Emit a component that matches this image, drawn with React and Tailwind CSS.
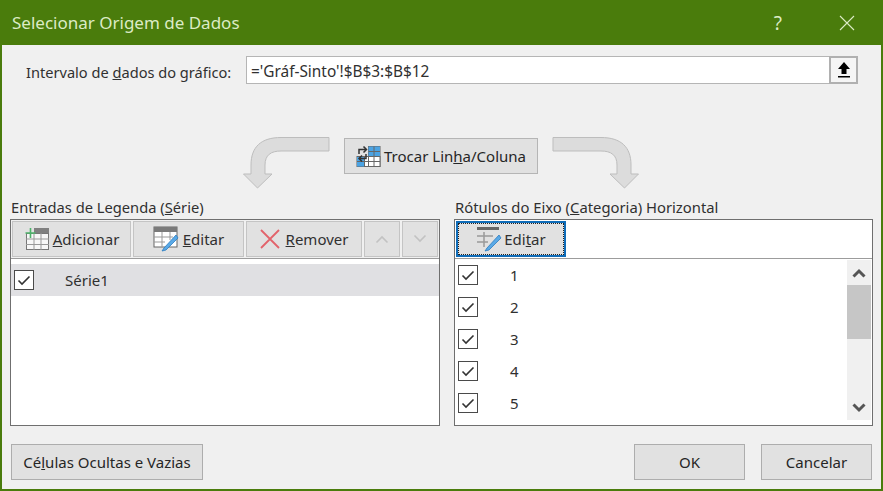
import React from 'react';

// ─── Small drawings ───────────────────────────────────────────────────────────

const BigArrow = ({ flip }) => (
  <svg width="88" height="52" viewBox="0 0 88 52" className={flip ? '-scale-x-100' : ''}>
    <path
      d="M86 .5 H38 C18 .5 8 10 8 28 V37 H.5 L14.5 51 L29 37 H22 V28 C22 18 28 14 38 14 H86 Z"
      fill="#dcdcdc"
      stroke="#bdbdbd"
      strokeWidth="1"
    />
  </svg>
);

const SwitchIcon = () => (
  <svg width="25" height="22" viewBox="0 0 25 22">
    <rect x="1" y="11.5" width="23" height="10" fill="#fff" stroke="#666" />
    <rect x="12.5" y="1.5" width="11.5" height="20" fill="#fff" stroke="#666" />
    <path d="M12.5 1.5 H24 V11 H12.5 Z" fill="#4ba3e3" />
    <path d="M1 12 H8 V21.5 H1 Z" fill="#4ba3e3" />
    <path d="M18 1.5V21.5M8.5 12V21.5M1 16.5H24M12.5 6.5H24M12.5 11.5H24" stroke="#666" fill="none" />
    <path d="M3 9 V4.5 H10 M7.5 1.5 L10.5 4.5 L7.5 7.5" stroke="#333" strokeWidth="1.5" fill="none" />
    <path d="M10 9 V13.5 H3.5 M6 10.5 L3 13.5 L6 16.5" stroke="#333" strokeWidth="1.5" fill="none" />
  </svg>
);

const AddIcon = () => (
  <svg width="26" height="24" viewBox="0 0 26 24">
    <rect x="2.5" y="6.5" width="22" height="16" fill="#f7f7f7" stroke="#777" />
    <rect x="10" y="1" width="15" height="5" fill="#808080" />
    <path d="M10 6V23M17 6V23M2 12H25M2 17.5H25" stroke="#999" fill="none" />
    <path d="M6.5 1V11M1.5 6H11.5" stroke="#4cb26a" strokeWidth="1.6" fill="none" />
  </svg>
);

const EditIcon = ({ light }) => (
  <svg width="26" height="26" viewBox="0 0 26 26">
    {light ? (
      <>
        <rect x="1" y="1" width="22" height="3" fill="#666" />
        <path d="M1 10H17M1 16H12M8 6V21" stroke="#999" strokeWidth="1.5" fill="none" />
      </>
    ) : (
      <>
        <rect x="1" y="1" width="23" height="20" fill="#fff" stroke="#666" />
        <rect x="1" y="1" width="23" height="5" fill="#7a7a7a" />
        <path d="M9 6V21M17 6V14M1 11H20M1 16H12" stroke="#999" fill="none" />
      </>
    )}
    <path d="M11 22 L9 25 L13 24 L25 12 L23 9 Z" fill="#5aa9e6" stroke="#2b7cc0" strokeWidth="0.8" />
  </svg>
);

const Check = () => (
  <span className="w-5 h-5 border border-[#4a4a4a] bg-white flex items-center justify-center shrink-0">
    <svg width="14" height="11" viewBox="0 0 14 11">
      <path d="M1.5 5.5 L5 9 L12.5 1.5" stroke="#333" strokeWidth="1.6" fill="none" />
    </svg>
  </span>
);

const Chevron = ({ up, color = '#555', width = 3 }) => (
  <svg width="16" height="10" viewBox="0 0 16 10">
    <path d={up ? 'M2.5 8.5 L8 3 L13.5 8.5' : 'M2.5 1.5 L8 7 L13.5 1.5'} stroke={color} strokeWidth={width} fill="none" />
  </svg>
);

// ─── Buttons ──────────────────────────────────────────────────────────────────

const Btn = ({ className = '', children }) => (
  <button className={`h-[36px] bg-[#e1e1e1] border border-[#adadad] flex items-center justify-center text-[#262626] shrink-0 ${className}`}>
    {children}
  </button>
);

const ToolBtn = ({ className = '', children }) => (
  <button className={`h-[36px] bg-[#e1e1e1] border border-[#c4c4c4] flex items-center justify-center text-[#303030] shrink-0 ${className}`}>
    {children}
  </button>
);

// ─── Main component ───────────────────────────────────────────────────────────

const App = () => {
  const categories = ['1', '2', '3', '4', '5'];

  return (
    <div className="w-[883px] h-[491px] overflow-hidden flex flex-col bg-[#f0f0f0] border-x-2 border-b-2 border-[#4a7c0c] text-[15px] leading-5 text-[#303030] font-['Noto_Sans','Open_Sans',sans-serif]">
      {/* Title bar */}
      <div className="h-[45px] -mx-[2px] bg-[#4a7c0c] flex items-center shrink-0 pl-3 pr-[28px] text-[#dcebc5]">
        <span className="text-[17px] grow">Selecionar Origem de Dados</span>
        <span className="text-[19px] mr-[57px]">?</span>
        <svg width="16" height="16" viewBox="0 0 16 16">
          <path d="M1 1 L15 15 M15 1 L1 15" stroke="#dcebc5" strokeWidth="1.1" fill="none" />
        </svg>
      </div>

      {/* Range row */}
      <div className="flex items-center h-[28px] mt-[11px] pl-[24px] shrink-0">
        <span className="w-[220px] shrink-0 text-[14.6px] pt-[3px]">
          Intervalo de <u>d</u>ados do gráfico:
        </span>
        <div className="w-[583px] h-[28px] bg-white border border-[#b5b5b5] border-r-0 flex items-center pl-[4px] pt-[3px] text-[15.4px]">
          ='Gráf-Sinto'!$B$3:$B$12
        </div>
        <div className="w-[29px] h-[28px] bg-[#f5f5f5] border-2 border-[#b0b0b0] flex items-center justify-center">
          <svg width="14" height="18" viewBox="0 0 14 18">
            <path d="M7 1 L13 8 H9.5 V13 H4.5 V8 H1 Z" fill="#000" />
            <rect x="1" y="15" width="12" height="1.5" fill="#000" />
          </svg>
        </div>
      </div>

      {/* Swap row */}
      <div className="flex items-start h-[53px] mt-[54px] pl-[241px] shrink-0">
        <div className="-mt-[1px] mr-[13px]"><BigArrow /></div>
        <Btn className="w-[194px] gap-[3px] border-[#b5b5b5]">
          <SwitchIcon />
          <span>Trocar Lin<u>h</u>a/Coluna</span>
        </Btn>
        <div className="-mt-[1px] ml-[13px]"><BigArrow flip /></div>
      </div>

      {/* Two lists */}
      <div className="flex gap-[14px] pl-[8px] mt-[6px] shrink-0">
        <div className="w-[430px] flex flex-col">
          <div className="h-[20px] mb-[2px] pl-[1px] text-[14.7px]">Entradas de Legenda (<u>S</u>érie)</div>
          <div className="h-[207px] border border-[#6f6f6f] bg-white flex flex-col">
            <div className="h-[39px] bg-[#f0f0f0] border-b border-[#9c9c9c] flex gap-[2px] pl-[1px] pt-[1px] shrink-0">
              <ToolBtn className="w-[119px] gap-[3px]">
                <AddIcon />
                <span><u>A</u>dicionar</span>
              </ToolBtn>
              <ToolBtn className="w-[111px] gap-[4px]">
                <EditIcon />
                <span><u>E</u>ditar</span>
              </ToolBtn>
              <ToolBtn className="w-[116px] gap-[6px]">
                <svg width="20" height="20" viewBox="0 0 20 20">
                  <path d="M1 1 L19 19 M19 1 L1 19" stroke="#e2636b" strokeWidth="1.8" fill="none" />
                </svg>
                <span><u>R</u>emover</span>
              </ToolBtn>
              <ToolBtn className="w-[36px]"><Chevron up color="#c2c2c2" width={1.6} /></ToolBtn>
              <ToolBtn className="w-[36px]"><Chevron color="#c2c2c2" width={1.6} /></ToolBtn>
            </div>
            <div className="mt-[5px] h-[32px] bg-[#e0e0e3] flex items-center pl-[3px]">
              <Check />
              <span className="ml-[31px]">Série1</span>
            </div>
          </div>
        </div>

        <div className="w-[419px] flex flex-col">
          <div className="h-[20px] mb-[2px] pl-[1px] text-[14.8px]">
            Rótulos do Eixo (<u>C</u>ategoria) Horizontal
          </div>
          <div className="h-[207px] border border-[#6f6f6f] bg-white flex flex-col">
            <div className="h-[39px] bg-white border-b border-[#9c9c9c] pl-[1px] pt-[1px] shrink-0">
              <button className="w-[110px] h-[36px] bg-[#e1e1e1] border-2 border-[#0f6cb8] outline-1 outline-dotted outline-[#222] -outline-offset-3 flex items-center justify-center gap-[2px] text-[#303030]">
                <EditIcon light />
                <span>Edi<u>t</u>ar</span>
              </button>
            </div>
            <div className="flex grow min-h-0">
              <div className="grow flex flex-col pl-[3px]">
                {categories.map(c => (
                  <div key={c} className="h-[32px] flex items-center shrink-0">
                    <Check />
                    <span className="ml-[32px]">{c}</span>
                  </div>
                ))}
              </div>
              <div className="w-[24px] h-[160px] mt-[1px] bg-[#f0f0f0] flex flex-col items-center shrink-0">
                <div className="h-[25px] flex items-center justify-center shrink-0"><Chevron up /></div>
                <div className="w-full h-[54px] bg-[#c6c6c6] shrink-0" />
                <div className="grow" />
                <div className="h-[25px] flex items-center justify-center shrink-0"><Chevron /></div>
              </div>
              <div className="w-[1px] shrink-0" />
            </div>
          </div>
        </div>
      </div>

      {/* Footer */}
      <div className="flex mt-[18px] pl-[9px] shrink-0 h-[34px]">
        <Btn className="w-[192px] h-[34px]">Cé<u>l</u>ulas Ocultas e Vazias</Btn>
        <div className="grow" />
        <Btn className="w-[111px] h-[34px] mr-[16px]">OK</Btn>
        <Btn className="w-[111px] h-[34px] mr-[9px]">Cancelar</Btn>
      </div>
    </div>
  );
};

export default App;
